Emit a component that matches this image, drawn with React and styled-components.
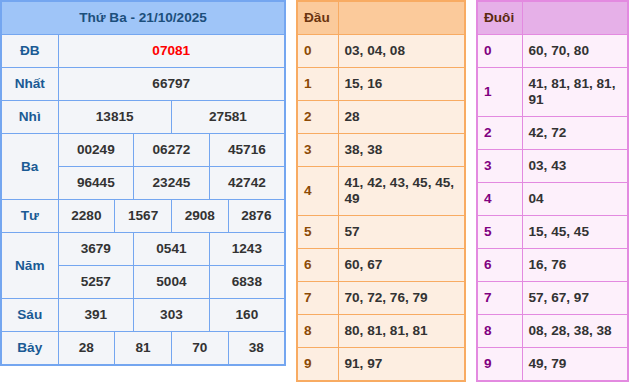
import React from 'react';
import styled, { createGlobalStyle } from 'styled-components';

const Global = createGlobalStyle`
  body {
    margin: 0;
    background: #fff;
    font-family: "Liberation Sans", Arial, sans-serif;
  }
`

const Page = styled.div`
  display: flex;
  align-items: flex-start;
  gap: 10px;
  width: 632px;
`

const Table = styled.table`
  border-collapse: collapse;
  width: ${p => p.$w}px;
  border: 2px solid ${p => p.$border};
  background: ${p => p.$bg};
  font-size: 13.6px;
  font-weight: bold;
  table-layout: fixed;

  & td, & th {
    border: 1px solid ${p => p.$border};
    padding: 8px 6px;
    line-height: 16px;
  }
`

const HeadCell = styled.th`
  background: ${p => p.$bg};
  color: ${p => p.$color};
  text-align: ${p => p.$align || 'left'};
  font-weight: bold;
`

const Label = styled.td`
  color: #1a5a94;
  text-align: center;
`

const Num = styled.td`
  color: ${p => (p.$red ? '#ff0000' : '#333')};
  text-align: center;
`

const Key = styled.td`
  color: ${p => p.$color};
`

const Val = styled.td`
  color: #333;
`

const prizes = [
  { name: 'ĐB', rows: [['07081']], red: true },
  { name: 'Nhất', rows: [['66797']] },
  { name: 'Nhì', rows: [['13815', '27581']] },
  { name: 'Ba', rows: [['00249', '06272', '45716'], ['96445', '23245', '42742']] },
  { name: 'Tư', rows: [['2280', '1567', '2908', '2876']] },
  { name: 'Năm', rows: [['3679', '0541', '1243'], ['5257', '5004', '6838']] },
  { name: 'Sáu', rows: [['391', '303', '160']] },
  { name: 'Bảy', rows: [['28', '81', '70', '38']] },
]

const dau = ['03, 04, 08', '15, 16', '28', '38, 38', '41, 42, 43, 45, 45, 49', '57', '60, 67', '70, 72, 76, 79', '80, 81, 81, 81', '91, 97']
const duoi = ['60, 70, 80', '41, 81, 81, 81, 91', '42, 72', '03, 43', '04', '15, 45, 45', '16, 76', '57, 67, 97', '08, 28, 38, 38', '49, 79']

function Results() {
  return (
    <Table $w={286} $border="#74a6f0" $bg="#f3f5f9">
      <colgroup>
        <col style={{ width: 57 }} />
        {Array.from({ length: 12 }).map((_, i) => <col key={i} />)}
      </colgroup>
      <thead>
        <tr>
          <HeadCell colSpan={13} $bg="#9fc5f8" $color="#1c4f7c" $align="center">Thứ Ba - 21/10/2025</HeadCell>
        </tr>
      </thead>
      <tbody>
        {prizes.map(p =>
          p.rows.map((row, ri) => (
            <tr key={p.name + ri}>
              {ri === 0 && <Label rowSpan={p.rows.length}>{p.name}</Label>}
              {row.map((n, i) => (
                <Num key={i} colSpan={12 / row.length} $red={p.red}>{n}</Num>
              ))}
            </tr>
          ))
        )}
      </tbody>
    </Table>
  )
}

function Loto({ title, data, w, keyW, border, bg, head, headColor, keyColor }) {
  return (
    <Table $w={w} $border={border} $bg={bg}>
      <colgroup>
        <col style={{ width: keyW }} />
        <col />
      </colgroup>
      <thead>
        <tr>
          <HeadCell $bg={head} $color={headColor}>{title}</HeadCell>
          <HeadCell $bg={head} $color={headColor}></HeadCell>
        </tr>
      </thead>
      <tbody>
        {data.map((v, i) => (
          <tr key={i}>
            <Key $color={keyColor}>{i}</Key>
            <Val>{v}</Val>
          </tr>
        ))}
      </tbody>
    </Table>
  )
}

export default function App() {
  return (
    <Page>
      <Global />
      <Results />
      <Loto title="Đầu" data={dau} w={170} keyW={41} border="#f8ab62" bg="#fdeee1" head="#fbca9b" headColor="#6b3510" keyColor="#8c4a06" />
      <Loto title="Đuôi" data={duoi} w={153} keyW={45} border="#e38ae0" bg="#fdf0fb" head="#e6b0e8" headColor="#5a2a10" keyColor="#800080" />
    </Page>
  )
}
